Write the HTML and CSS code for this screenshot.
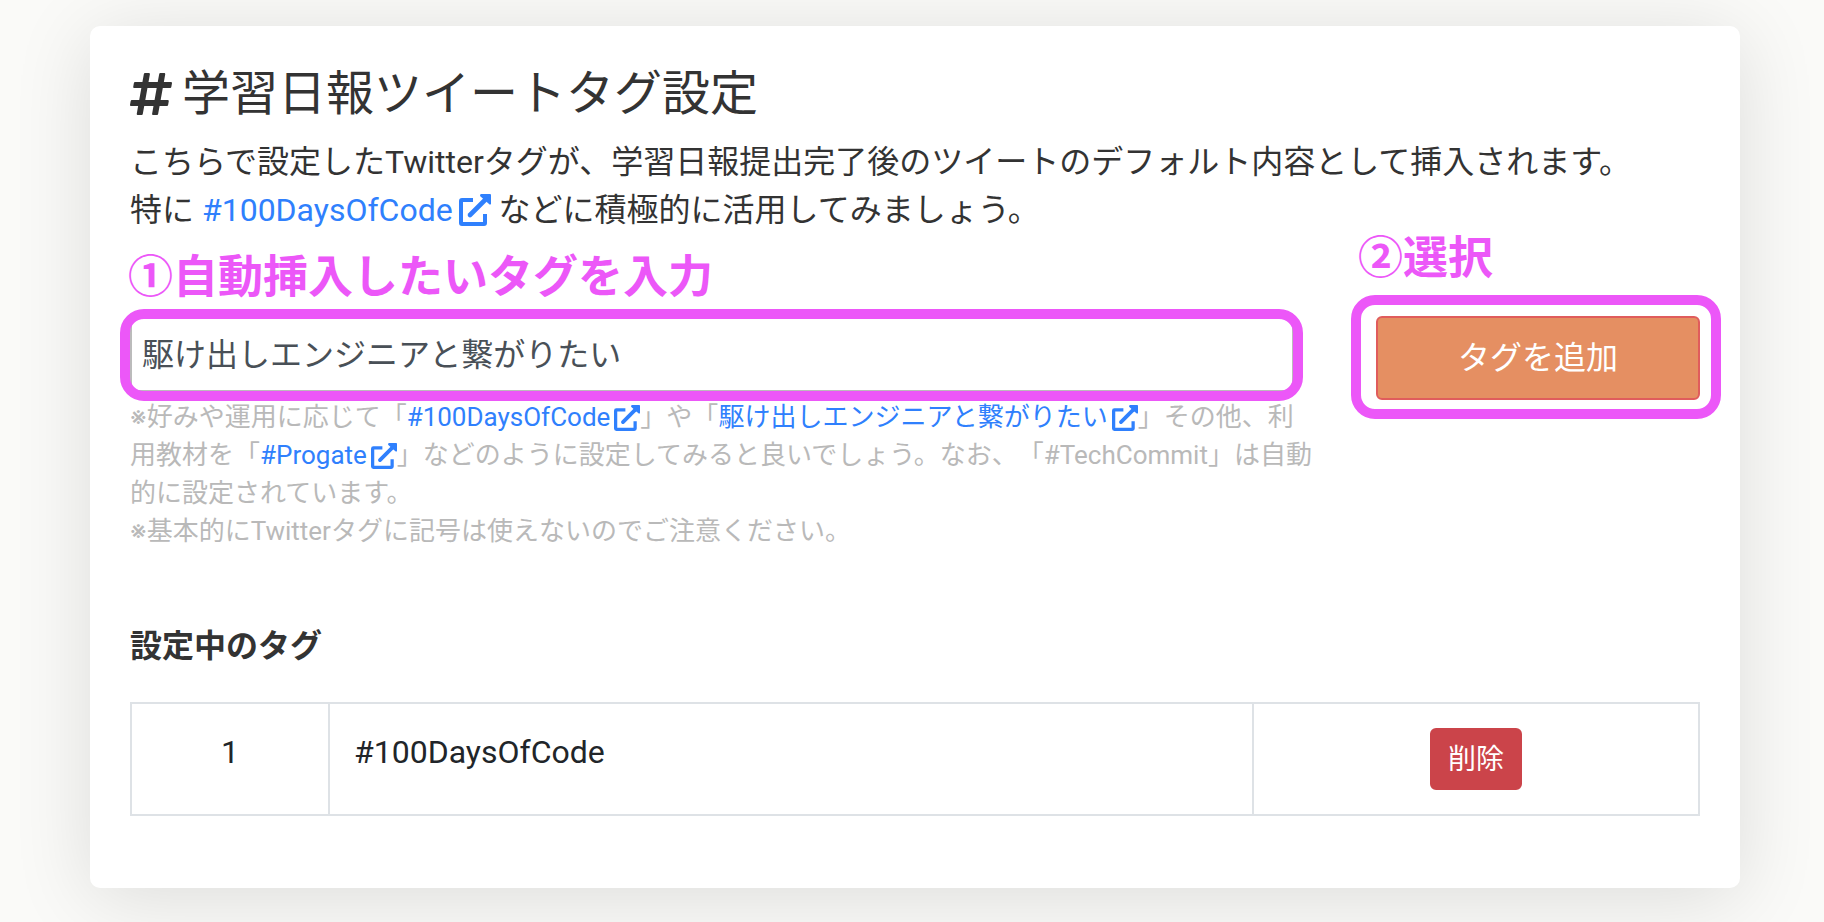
FILE: index.html
```
<!DOCTYPE html>
<html lang="ja">
<head>
<meta charset="utf-8">
<title>学習日報ツイートタグ設定</title>
<link rel="stylesheet" href="styles.css">
</head>
<body>
<svg class="sprite" aria-hidden="true">
  <symbol id="external" viewBox="0 0 32 32">
    <path d="M14 6H3Q2 6 2 7V29Q2 30 3 30H25Q26 30 26 29V20" fill="none" stroke="currentColor" stroke-width="4"/>
    <path d="M11 21L26 6" fill="none" stroke="currentColor" stroke-width="4.600" stroke-linecap="round"/>
    <path d="M22 0H31Q32 0 32 1V10Q31 11 30 10L21 2Q21 0 22 0Z" fill="currentColor"/>
  </symbol>
</svg>
<main class="card">
  <h1 class="title">
    <svg class="title-icon" viewBox="0 0 448 512" aria-hidden="true"><path fill="currentColor" d="M440.667 182.109l7.143-40c1.313-7.355-4.342-14.109-11.813-14.109h-74.81l14.623-81.891C377.123 38.754 371.468 32 363.997 32h-40.632a12 12 0 0 0-11.813 9.891L296.175 128H197.54l14.623-81.891C213.477 38.754 207.822 32 200.35 32h-40.632a12 12 0 0 0-11.813 9.891L132.528 128H53.432a12 12 0 0 0-11.813 9.891l-7.143 40C33.163 185.246 38.818 192 46.289 192h74.81L98.242 320H19.146a12 12 0 0 0-11.813 9.891l-7.143 40C-1.123 377.246 4.532 384 12.003 384h74.81L72.19 465.891C70.877 473.246 76.532 480 84.003 480h40.632a12 12 0 0 0 11.813-9.891L151.826 384h98.634l-14.623 81.891C234.523 473.246 240.178 480 247.65 480h40.632a12 12 0 0 0 11.813-9.891L315.472 384h79.096a12 12 0 0 0 11.813-9.891l7.143-40c1.313-7.355-4.342-14.109-11.813-14.109h-74.81l22.857-128h79.096a12 12 0 0 0 11.813-9.891zM261.889 320h-98.634l22.857-128h98.634l-22.857 128z"/></svg>
    学習日報ツイートタグ設定
  </h1>
  <p class="lead">こちらで設定したTwitterタグが、学習日報提出完了後のツイートのデフォルト内容として挿入されます。<br>特に <a href="#">#100DaysOfCode<svg class="ext"><use href="#external"/></svg></a> などに積極的に活用してみましょう。</p>
  <form class="tag-form">
    <div>
      <div class="field">
        <label class="callout" for="tag">①自動挿入したいタグを入力</label>
        <input class="tag-input" id="tag" type="text" value="駆け出しエンジニアと繋がりたい">
        <span class="ring ring-input"></span>
      </div>
      <p class="note">※好みや運用に応じて「<a href="#">#100DaysOfCode<svg class="ext"><use href="#external"/></svg></a>」や「<a href="#">駆け出しエンジニアと繋がりたい<svg class="ext"><use href="#external"/></svg></a>」その他、利<br>用教材を「<a href="#">#Progate<svg class="ext"><use href="#external"/></svg></a>」などのように設定してみると良いでしょう。なお、「#TechCommit」は自動<br>的に設定されています。<br>※基本的にTwitterタグに記号は使えないのでご注意ください。</p>
    </div>
    <div class="field">
      <span class="callout callout-add">②選択</span>
      <button class="add" type="button">タグを追加</button>
      <span class="ring ring-add"></span>
    </div>
  </form>
  <h2 class="subtitle">設定中のタグ</h2>
  <table class="tags">
    <tr>
      <td class="num">1</td>
      <td class="name">#100DaysOfCode</td>
      <td class="action"><button class="delete" type="button">削除</button></td>
    </tr>
  </table>
</main>
</body>
</html>
```
FILE: styles.css
```
* { box-sizing: border-box; }
body {
  margin: 0;
  padding: 26px 84px 34px 90px;
  background: #fafaf8;
  color: #333;
  font: 32px/48px Roboto, Inter, "Noto Sans CJK JP", sans-serif;
  text-spacing-trim: space-all;
}
.sprite { display: none; }
.card {
  padding: 40px 40px 72px;
  background: #fff;
  border-radius: 10px;
  box-shadow: 0 10px 80px rgba(0, 0, 0, 0.12);
}
a { color: #2f80fd; text-decoration: none; }
.title {
  display: flex;
  align-items: center;
  gap: 10px;
  margin: 0 0 16px;
  font-size: 48px;
  font-weight: 400;
  line-height: 56px;
}
.title-icon { width: 42px; height: 48px; }
.lead { margin: 0 0 82px; }
.ext { width: 32px; height: 32px; margin-left: 6px; vertical-align: -5px; }
.tag-form {
  display: grid;
  grid-template-columns: minmax(0, 1164fr) minmax(0, 324fr);
  gap: 82px;
  align-items: start;
}
.field { position: relative; }
.callout {
  position: absolute;
  left: -2px;
  bottom: calc(100% + 12px);
  color: #ec57f8;
  font-family: "Noto Sans CJK JP", sans-serif;
  font-size: 45px;
  font-weight: 700;
  line-height: 60px;
  white-space: nowrap;
}
.callout-add { left: -18px; bottom: calc(100% + 31px); }
.ring {
  position: absolute;
  border: 10px solid #ec57f8;
  border-radius: 24px;
  pointer-events: none;
}
.ring-input { inset: -7px -9px -9px -10px; }
.ring-add { inset: -21px -21px -19px -25px; }
.tag-input {
  display: block;
  width: 100%;
  height: 76px;
  padding: 0 10px 4px;
  border: 2px solid #bbb;
  border-radius: 8px;
  background: #fff;
  color: #495057;
  font: inherit;
}
.note {
  margin: 6px 0 72px;
  color: #b9b9b9;
  font-size: 26px;
  line-height: 38px;
  white-space: nowrap;
}
.note .ext { width: 26px; height: 26px; margin-left: 4px; }
.add {
  display: block;
  width: 100%;
  height: 84px;
  border: 2px solid #e05c5c;
  border-radius: 6px;
  background: #e58f62;
  color: #fff;
  font: inherit;
}
.subtitle { margin: 0 0 32px; font-size: 32px; font-weight: 700; line-height: 48px; }
.tags { width: 100%; border-collapse: collapse; color: #212529; }
.tags td { padding: 24px; border: 2px solid #dee2e6; vertical-align: top; }
.num { width: 198px; text-align: center; }
.action { width: 446px; text-align: center; }
.delete {
  display: block;
  margin: 0 auto;
  padding: 9px 16px 7px;
  border: 2px solid #cb444a;
  border-radius: 6px;
  background: #cb444a;
  color: #fff;
  font: inherit;
  font-size: 28px;
  line-height: 42px;
}
```
